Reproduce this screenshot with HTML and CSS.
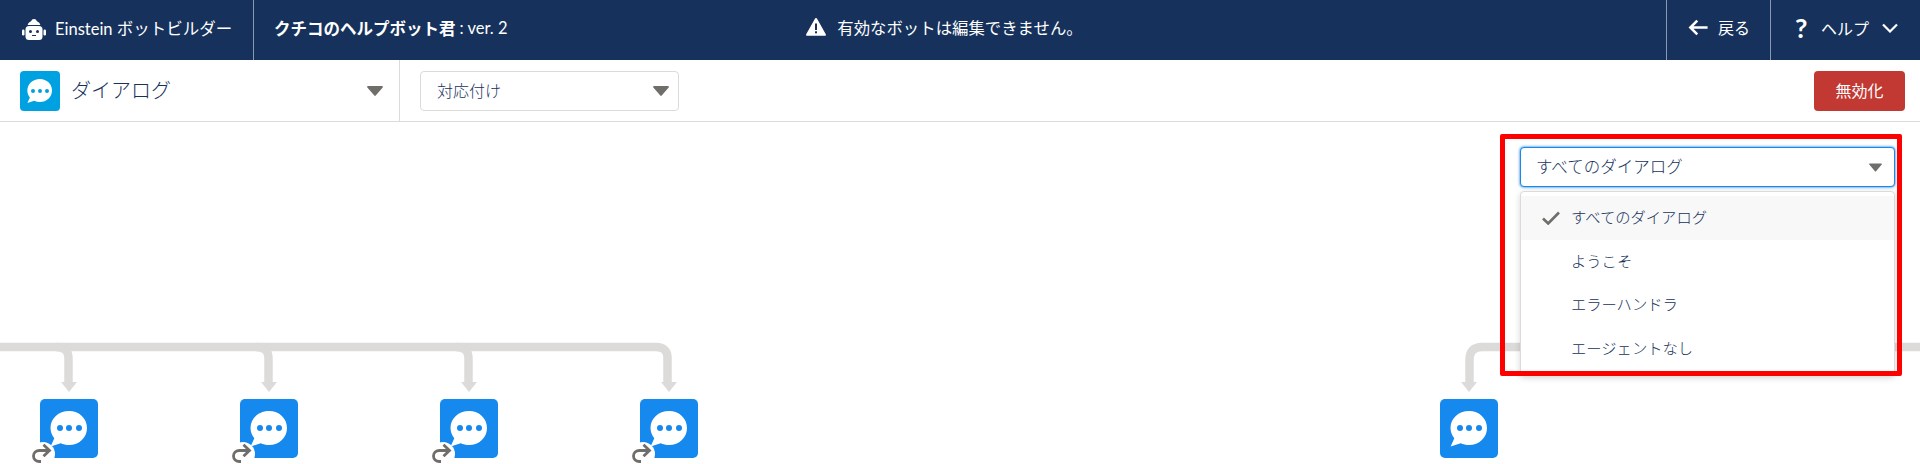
FILE: index.html
```html
<!DOCTYPE html>
<html lang="ja">
<head>
  <meta charset="UTF-8">
  <title>Einstein ボットビルダー</title>
  <link rel="stylesheet" href="styles.css">
</head>
<body>
  <svg class="defs" width="0" height="0">
    <symbol id="bubble" viewBox="0 0 36 36">
      <path fill="#fff" d="M18.5 0C8.3 0 .5 7.300 .5 16.500c0 3.800 1.400 7.300 3.700 10.100L.6 34.600l9.800-3.200c2.500 1.100 5.200 1.700 8.100 1.700 10 0 17.500-7.300 17.500-16.600S28.500 0 18.500 0z"/>
    </symbol>
    <symbol id="caret" viewBox="0 0 16 10">
      <path fill="#706e6b" d="M1 0h14c.8 0 1.200.8.700 1.400L8.700 9.600c-.4.500-1 .5-1.400 0L.3 1.400C-.2.800.2 0 1 0z"/>
    </symbol>
    <symbol id="redirect" viewBox="0 0 20 20">
      <path fill="none" stroke="#706e6b" stroke-width="2.800" d="M9 18.500H7.500C4 18.500 1.500 16 1.500 13s2.500-5.500 6-5.500H17"/>
      <path fill="none" stroke="#706e6b" stroke-width="2.800" d="M11.500 1.800l6 5.700-6 5.700"/>
    </symbol>
  </svg>

  <header class="topbar">
    <div class="topbar-left">
      <div class="brand">
        <svg class="robot" viewBox="0 0 24 22">
          <path fill="#fff" d="M12 0a3 3 0 0 1 2.900 2.200C16.800 3 18 4.300 18.300 6H5.700C6 4.300 7.200 3 9.100 2.200A3 3 0 0 1 12 0z"/>
          <rect fill="#fff" x="3.500" y="7" width="17" height="14" rx="3.500"/>
          <rect fill="#fff" x="0" y="10.500" width="2.500" height="6" rx="1.200"/>
          <rect fill="#fff" x="21.500" y="10.500" width="2.500" height="6" rx="1.200"/>
          <circle fill="#16325c" cx="8.500" cy="12.500" r="1.500"/>
          <circle fill="#16325c" cx="15.500" cy="12.500" r="1.500"/>
          <path fill="none" stroke="#16325c" stroke-width="1" d="M10 16.500h4"/>
        </svg>
        <span>Einstein ボットビルダー</span>
      </div>
      <div class="bot-name"><b>クチコのヘルプボット君</b> : ver. 2</div>
    </div>
    <div class="notice">
      <svg class="warn" viewBox="0 0 20 18">
        <path fill="#fff" d="M10 0c.5 0 .9.300 1.100.700l8.700 15.600c.4.700-.1 1.500-.9 1.500H1.100c-.8 0-1.300-.8-.9-1.500L8.900.7C9.100.3 9.500 0 10 0z"/>
        <rect fill="#16325c" x="9" y="5.500" width="2" height="6.500"/>
        <rect fill="#16325c" x="9" y="13.300" width="2" height="2"/>
      </svg>
      <span>有効なボットは編集できません。</span>
    </div>
    <div class="topbar-right">
      <a class="top-link back">
        <svg class="arrow" viewBox="0 0 18 16">
          <path fill="none" stroke="#fff" stroke-width="2.400" d="M18 8H1.800M8.300 1.500L1.800 8l6.500 6.500"/>
        </svg>
        戻る
      </a>
      <a class="top-link help">
        <span class="qmark">?</span>
        ヘルプ
        <svg class="chev" viewBox="0 0 16 10">
          <path fill="none" stroke="#fff" stroke-width="2.200" d="M1 1.500l7 7 7-7"/>
        </svg>
      </a>
    </div>
  </header>

  <div class="subbar">
    <div class="dialog-picker">
      <div class="dialog-icon">
        <svg class="dialog-bubble" viewBox="0 0 36 36"><use href="#bubble"/></svg>
        <i></i><i></i><i></i>
      </div>
      <span class="dialog-title">ダイアログ</span>
      <svg class="caret"><use href="#caret"/></svg>
    </div>
    <div class="mapping">
      <div class="select">
        <span>対応付け</span>
        <svg class="caret"><use href="#caret"/></svg>
      </div>
    </div>
    <button class="deactivate">無効化</button>
  </div>

  <main class="canvas">
    <svg class="lines" width="1920" height="342" viewBox="0 0 1920 342">
      <g fill="none" stroke="#dddbda" stroke-width="8.500">
        <path d="M0 225H656Q667.500 225 667.500 236V262"/>
        <path d="M56 225Q68.500 225 68.500 236V262"/>
        <path d="M256 225Q268.500 225 268.500 236V262"/>
        <path d="M456 225Q468.500 225 468.500 236V262"/>
        <path d="M1920 225H1482Q1469.500 225 1469.500 238V262"/>
      </g>
      <g fill="#dddbda">
        <path d="M61 260H77L69 270Z"/>
        <path d="M261 260H277L269 270Z"/>
        <path d="M461 260H477L469 270Z"/>
        <path d="M661 260H677L669 270Z"/>
        <path d="M1461 260H1477L1469 270Z"/>
      </g>
    </svg>

    <div class="node node-a">
      <svg class="node-bubble" viewBox="0 0 36 36"><use href="#bubble"/></svg>
      <i></i><i></i><i></i>
      <span class="badge"></span>
      <svg class="redirect"><use href="#redirect"/></svg>
    </div>
    <div class="node node-b">
      <svg class="node-bubble" viewBox="0 0 36 36"><use href="#bubble"/></svg>
      <i></i><i></i><i></i>
      <span class="badge"></span>
      <svg class="redirect"><use href="#redirect"/></svg>
    </div>
    <div class="node node-c">
      <svg class="node-bubble" viewBox="0 0 36 36"><use href="#bubble"/></svg>
      <i></i><i></i><i></i>
      <span class="badge"></span>
      <svg class="redirect"><use href="#redirect"/></svg>
    </div>
    <div class="node node-d">
      <svg class="node-bubble" viewBox="0 0 36 36"><use href="#bubble"/></svg>
      <i></i><i></i><i></i>
      <span class="badge"></span>
      <svg class="redirect"><use href="#redirect"/></svg>
    </div>
    <div class="node node-e">
      <svg class="node-bubble" viewBox="0 0 36 36"><use href="#bubble"/></svg>
      <i></i><i></i><i></i>
    </div>

    <div class="filter">
      <div class="filter-box">
        <span>すべてのダイアログ</span>
        <svg class="caret"><use href="#caret"/></svg>
      </div>
      <ul class="filter-menu">
        <li class="current">
          <svg class="check" viewBox="0 0 18 14">
            <path fill="none" stroke="#706e6b" stroke-width="2.600" d="M1 7.500l5.200 5L17 1.500"/>
          </svg>
          <span>すべてのダイアログ</span>
        </li>
        <li><span>ようこそ</span></li>
        <li><span>エラーハンドラ</span></li>
        <li><span>エージェントなし</span></li>
      </ul>
    </div>
    <div class="callout"></div>
  </main>
</body>
</html>
```

FILE: styles.css
```css
* {
  box-sizing: border-box;
}

html, body {
  height: 100%;
}

body {
  margin: 0;
  display: flex;
  flex-direction: column;
  overflow: hidden;
  background: #fff;
  color: #16325c;
  font-family: Lato, "Noto Sans CJK JP", sans-serif;
  font-size: 16px;
  font-weight: 300;
}

.defs {
  position: absolute;
}

/* top bar */
.topbar {
  display: flex;
  flex: 0 0 60px;
  align-items: stretch;
  background: #16325c;
  color: #fff;
  font-weight: 400;
}

.topbar-left, .topbar-right {
  display: flex;
  flex: 1 1 0;
}

.topbar-left {
  font-size: 16.500px;
}

.topbar-right {
  justify-content: flex-end;
}

.brand {
  display: flex;
  align-items: center;
  width: 254px;
  padding: 0 0 5px 22px;
  border-right: 1px solid rgba(255, 255, 255, .5);
  white-space: nowrap;
}

.robot {
  width: 24px;
  height: 22px;
  margin: 5px 9px 0 0;
}

.bot-name {
  display: flex;
  align-items: center;
  gap: 4px;
  padding: 0 0 5px 20px;
  white-space: nowrap;
}

.bot-name b {
  font-weight: 700;
}

.notice {
  display: flex;
  align-items: center;
  margin-right: 31px;
  padding-bottom: 6px;
  font-size: 16.400px;
  white-space: nowrap;
}

.warn {
  width: 20px;
  height: 18px;
  margin-right: 11px;
}

.top-link {
  display: flex;
  align-items: center;
  padding-bottom: 5px;
  border-left: 1px solid rgba(255, 255, 255, .5);
  white-space: nowrap;
}

.back {
  width: 104px;
  padding-left: 21px;
  padding-bottom: 6px;
}

.arrow {
  width: 20px;
  height: 17px;
  margin-right: 10px;
}

.help {
  width: 150px;
  padding-left: 24px;
}

.qmark {
  width: 14px;
  margin-right: 12px;
  font-size: 27px;
  font-weight: 700;
  line-height: 1;
}

.chev {
  width: 16px;
  height: 10px;
  margin-left: 13px;
}

/* second bar */
.subbar {
  display: flex;
  flex: 0 0 62px;
  align-items: center;
  border-bottom: 1px solid #dddbda;
}

.dialog-picker {
  display: flex;
  align-items: center;
  width: 400px;
  height: 100%;
  padding: 0 16px 0 20px;
  border-right: 1px solid #dddbda;
}

.dialog-icon {
  display: flex;
  position: relative;
  align-items: center;
  justify-content: center;
  gap: 3px;
  width: 40px;
  height: 40px;
  border-radius: 4px;
  background: #00a1e0;
}

.dialog-bubble {
  position: absolute;
  left: 7px;
  top: 8px;
  width: 25px;
  height: 25px;
}

.dialog-icon i {
  position: relative;
  width: 4px;
  height: 4px;
  border-radius: 50%;
  background: #00a1e0;
}

.dialog-title {
  flex: 1;
  margin-left: 11px;
  padding-bottom: 2px;
  font-size: 20px;
}

.caret {
  flex: none;
  width: 16px;
  height: 10px;
}

.mapping {
  flex: 1;
  padding-left: 20px;
}

.select {
  display: flex;
  align-items: center;
  justify-content: space-between;
  width: 259px;
  height: 40px;
  padding: 0 9px 0 16px;
  border: 1px solid #dddbda;
  border-radius: 4px;
}

.select span {
  padding-bottom: 2px;
}

.deactivate {
  width: 91px;
  height: 40px;
  margin-right: 15px;
  padding: 0 0 2px;
  border: 0;
  border-radius: 4px;
  background: #c23934;
  color: #fff;
  font: inherit;
  font-weight: 400;
}

/* diagram */
.canvas {
  position: relative;
  flex: 1;
}

.lines {
  position: absolute;
  left: 0;
  top: 0;
}

.node {
  display: flex;
  position: absolute;
  top: 277px;
  align-items: center;
  justify-content: center;
  gap: 3.500px;
  width: 58px;
  height: 59px;
  padding-bottom: 2px;
  border-radius: 5px;
  background: #1589ee;
}

.node-a { left: 40px; }
.node-b { left: 240px; }
.node-c { left: 440px; }
.node-d { left: 640px; }
.node-e { left: 1440px; }

.node-bubble {
  position: absolute;
  left: 10px;
  top: 12px;
  width: 37px;
  height: 37px;
}

.node i {
  position: relative;
  width: 6px;
  height: 6px;
  border-radius: 50%;
  background: #1589ee;
}

.badge {
  position: absolute;
  left: -9px;
  bottom: -8px;
  width: 24px;
  height: 24px;
  border-radius: 50%;
  background: #fff;
}

.redirect {
  position: absolute;
  left: -8px;
  top: 44px;
  width: 20px;
  height: 20px;
}

/* dialog filter, sits over the diagram */
.filter {
  position: absolute;
  left: 1520px;
  top: 25px;
  width: 375px;
  height: 229px;
}

.filter-box {
  display: flex;
  align-items: center;
  justify-content: space-between;
  height: 40px;
  padding: 0 12px 0 15px;
  border: 1px solid #1589ee;
  border-radius: 4px;
  background: #fff;
  box-shadow: 0 0 3px #0070d2;
  font-size: 16.500px;
}

.filter-box span {
  padding-bottom: 2px;
}

.filter-box .caret {
  width: 13px;
  height: 9px;
}

.filter-menu {
  height: 185px;
  margin: 4px 0 0;
  padding: 4px 0 0;
  border: 1px solid #dddbda;
  border-radius: 4px;
  background: #fff;
  box-shadow: 0 2px 6px rgba(0, 0, 0, .16);
  font-size: 15.300px;
  list-style: none;
}

.filter-menu li {
  display: flex;
  align-items: center;
  height: 43.500px;
  padding-left: 50px;
}

.filter-menu li span {
  padding-bottom: 3px;
}

.filter-menu .current {
  padding-left: 21px;
  background: #f8f8f8;
}

.check {
  width: 18px;
  height: 14px;
  margin-right: 11px;
}

.callout {
  position: absolute;
  left: 1500px;
  top: 12px;
  width: 402px;
  height: 242px;
  border: 5px solid #f00;
  border-radius: 2px;
}
```
